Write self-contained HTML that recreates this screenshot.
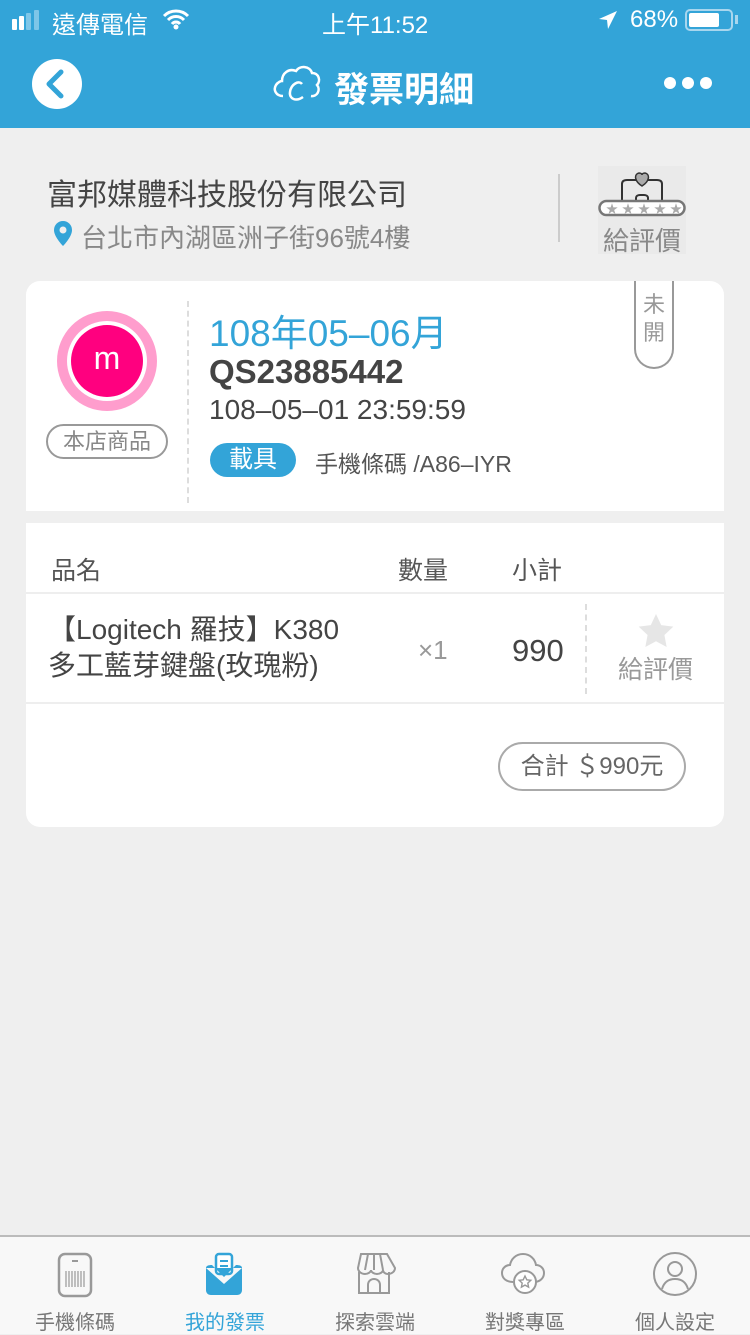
<!DOCTYPE html>
<html><head><meta charset="utf-8"><style>
*{margin:0;padding:0;box-sizing:border-box}
body{width:750px;height:1334px;background:#efefef;font-family:"Liberation Sans","Noto Sans CJK TC",sans-serif;position:relative;overflow:hidden;color:#444}
.abs{position:absolute}
.hdr{left:0;top:0;width:750px;height:128px;background:#33a4d8;color:#fff}
.card{left:26px;top:281px;width:698px;height:546px;background:#fff;border-radius:14px;overflow:hidden}
.tab{position:absolute;top:1306px;width:150px;text-align:center;font-size:20px;color:#777}
</style></head><body>
<div class="abs hdr">
  <div class="abs" style="left:12px;top:19px;width:5px;height:11px;background:#fff;border-radius:1px"></div>
  <div class="abs" style="left:19px;top:16px;width:5px;height:14px;background:#fff;border-radius:1px"></div>
  <div class="abs" style="left:26px;top:13px;width:5px;height:17px;background:#7ec6e8;border-radius:1px"></div>
  <div class="abs" style="left:34px;top:10px;width:5px;height:20px;background:#7ec6e8;border-radius:1px"></div>
  <div class="abs" style="left:52px;top:5px;font-size:24px">遠傳電信</div>
  <svg class="abs" style="left:162px;top:8px" width="28" height="22" viewBox="0 0 28 22"><path d="M2 8a17 17 0 0 1 24 0M6 12a11 11 0 0 1 16 0M10 16a5 5 0 0 1 8 0" stroke="#fff" stroke-width="3" fill="none"/><circle cx="14" cy="19" r="2.5" fill="#fff"/></svg>
  <div class="abs" style="left:322px;top:5px;font-size:24px">上午11:52</div>
  <svg class="abs" style="left:598px;top:10px" width="20" height="20" viewBox="0 0 20 20"><path d="M19 1L1 9l8 1 1 9z" fill="#fff"/></svg>
  <div class="abs" style="left:630px;top:6px;font-size:24px">68%</div>
  <div class="abs" style="left:685px;top:9px;width:48px;height:22px;border:2px solid #a8d6ee;border-radius:5px"><div style="margin:2px;width:30px;height:14px;background:#fff;border-radius:2px"></div></div>
  <div class="abs" style="left:735px;top:15px;width:3px;height:9px;background:#a8d6ee"></div>
  <div class="abs" style="left:32px;top:59px;width:50px;height:50px;border-radius:50%;background:#fff"></div>
  <svg class="abs" style="left:32px;top:59px" width="50" height="50" viewBox="0 0 50 50"><path d="M29 13L17 25l12 12" stroke="#33a4d8" stroke-width="5" fill="none" stroke-linecap="round" stroke-linejoin="round"/></svg>
  <svg class="abs" style="left:271px;top:60px" width="52" height="46" viewBox="0 0 52 46"><path d="M12 36c-7 0-10-6-7-11 2-3 5-4 6-4 0-8 7-13 14-10 4-6 14-5 16 2 7 0 9 8 5 12 4 5 0 12-6 11" stroke="#fff" stroke-width="2.5" fill="none"/><path d="M31 24c-3-4-11 0-12 8-1 7 6 10 13 5" stroke="#fff" stroke-width="2.5" fill="none"/></svg>
  <div class="abs" style="left:334px;top:62px;font-size:35px;font-weight:bold">發票明細</div>
  <div class="abs" style="left:664px;top:77px;width:12px;height:12px;border-radius:50%;background:#fff"></div>
  <div class="abs" style="left:682px;top:77px;width:12px;height:12px;border-radius:50%;background:#fff"></div>
  <div class="abs" style="left:700px;top:77px;width:12px;height:12px;border-radius:50%;background:#fff"></div>
</div>
<div class="abs" style="left:47px;top:170px;font-size:30px;color:#444">富邦媒體科技股份有限公司</div>
<svg class="abs" style="left:52px;top:220px" width="22" height="28" viewBox="0 0 22 28"><path d="M11 1a9 9 0 0 1 9 9c0 7-9 16-9 16S2 17 2 10a9 9 0 0 1 9-9z" fill="#33a4d8"/><circle cx="11" cy="10" r="3.5" fill="#efefef"/></svg>
<div class="abs" style="left:81px;top:218px;font-size:26px;color:#888">台北市內湖區洲子街96號4樓</div>
<div class="abs" style="left:558px;top:174px;width:2px;height:68px;background:#ccc"></div>
<div class="abs" style="left:598px;top:166px;width:88px;height:88px;background:#eaeaea"></div>
<svg class="abs" style="left:598px;top:166px" width="88" height="52" viewBox="0 0 88 52"><path d="M24 37V18c0-3 2-4 5-4h30c3 0 5 1 5 4v19" stroke="#333" stroke-width="2" fill="none"/><path d="M38 37v-5c0-2 2-3 4-3h4c2 0 4 1 4 3v5" stroke="#333" stroke-width="2" fill="none"/><path d="M44 20c-8-5-8-12-3-13 2 0 3 1 3 2 0-1 1-2 3-2 5 1 5 8-3 13z" fill="#aaa" stroke="#333" stroke-width="1.5"/><rect x="1.5" y="35" width="85" height="14" rx="7" fill="#fff" stroke="#777" stroke-width="2.5"/><text x="8" y="47" font-size="12" fill="#aaa" letter-spacing="4">★★★★★</text></svg>
<div class="abs" style="left:603px;top:221px;font-size:26px;color:#888">給評價</div>

<div class="abs card">
  <div class="abs" style="left:31px;top:30px;width:100px;height:100px;border-radius:50%;background:#ff9dcd"></div>
  <div class="abs" style="left:41px;top:40px;width:80px;height:80px;border-radius:50%;background:#fff"></div>
  <div class="abs" style="left:45px;top:44px;width:72px;height:72px;border-radius:50%;background:#ff007f;color:#fff;font-size:32px;text-align:center;line-height:66px">m</div>
  <div class="abs" style="left:20px;top:143px;width:122px;height:35px;border:2px solid #999;border-radius:18px;font-size:22px;color:#888;text-align:center;line-height:31px">本店商品</div>
  <div class="abs" style="left:161px;top:20px;height:202px;border-left:2px dashed #ddd"></div>
  <div class="abs" style="left:183px;top:22px;font-size:37px;color:#33a4d8">108年05–06月</div>
  <div class="abs" style="left:183px;top:72px;font-size:33px;font-weight:bold;color:#444">QS23885442</div>
  <div class="abs" style="left:183px;top:113px;font-size:28px;color:#444">108–05–01 23:59:59</div>
  <div class="abs" style="left:184px;top:162px;width:86px;height:34px;border-radius:17px;background:#33a4d8;color:#fff;font-size:24px;text-align:center;line-height:34px">載具</div>
  <div class="abs" style="left:289px;top:164px;font-size:23px;color:#555">手機條碼 /A86–IYR</div>
  <div class="abs" style="left:608px;top:-2px;width:40px;height:90px;border:2px solid #999;border-top:none;border-radius:0 0 20px 20px;font-size:22px;color:#999;text-align:center;line-height:28px;padding-top:12px">未<br>開</div>
  <div class="abs" style="left:0;top:230px;width:698px;height:12px;background:#efefef"></div>
  <div class="abs" style="left:25px;top:270px;font-size:25px;color:#555">品名</div>
  <div class="abs" style="left:372px;top:270px;font-size:25px;color:#555">數量</div>
  <div class="abs" style="left:486px;top:270px;font-size:25px;color:#555">小計</div>
  <div class="abs" style="left:0;top:311px;width:698px;height:2px;background:#eee"></div>
  <div class="abs" style="left:22px;top:331px;font-size:28px;color:#444;line-height:36px">【Logitech 羅技】K380<br>多工藍芽鍵盤(玫瑰粉)</div>
  <div class="abs" style="left:392px;top:354px;font-size:26px;color:#999">×1</div>
  <div class="abs" style="left:486px;top:352px;font-size:31px;color:#444">990</div>
  <div class="abs" style="left:559px;top:323px;height:90px;border-left:2px dashed #ddd"></div>
  <svg class="abs" style="left:612px;top:333px" width="36" height="34" viewBox="0 0 24 23"><path d="M12 0l3.5 7.5 8.2 1-6 5.7 1.5 8.1L12 18.4l-7.2 3.9 1.5-8.1-6-5.7 8.2-1z" fill="#e6e6e6"/></svg>
  <div class="abs" style="left:592px;top:369px;font-size:25px;color:#999">給評價</div>
  <div class="abs" style="left:0;top:421px;width:698px;height:2px;background:#eee"></div>
  <div class="abs" style="left:472px;top:461px;width:188px;height:49px;border:2px solid #aaa;border-radius:25px;font-size:24px;color:#666;text-align:center;line-height:45px">合計 ＄990元</div>
</div>

<div class="abs" style="left:0;top:1235px;width:750px;height:99px;background:#f8f8f8;border-top:2px solid #bbb"></div>
<svg class="abs" style="left:57px;top:1252px" width="36" height="46" viewBox="0 0 36 46"><rect x="2" y="2" width="32" height="42" rx="6" fill="none" stroke="#999" stroke-width="2.5"/><path d="M15 9h6" stroke="#999" stroke-width="2"/><path d="M9 19v16M12 19v16M15 19v16M18 19v16M21 19v16M24 19v16M27 19v16" stroke="#999" stroke-width="1.2"/></svg>
<svg class="abs" style="left:202px;top:1252px" width="44" height="44" viewBox="0 0 44 44"><rect x="14" y="2" width="16" height="20" rx="3" fill="#fff" stroke="#33a4d8" stroke-width="2.5"/><path d="M18 9h8M18 14h8" stroke="#33a4d8" stroke-width="2"/><path d="M4 16l18 16 18-16v22c0 3-2 5-5 5H9c-3 0-5-2-5-5z" fill="#33a4d8"/><path d="M4 16c0-2 2-3 6-3l12 12 12-12c4 0 6 1 6 3" fill="#33a4d8"/></svg>
<svg class="abs" style="left:351px;top:1252px" width="46" height="44" viewBox="0 0 46 44"><path d="M8 20v21h30V20M17 41v-8c0-4 3-6 6-6s6 2 6 6v8" fill="none" stroke="#999" stroke-width="2"/><path d="M10 2h26l8 14c0 4-4 6-7 6s-5-2-5-4c0 2-3 4-6 4s-6-2-6-4c0 2-3 4-6 4s-7-2-7-6z" fill="none" stroke="#999" stroke-width="2"/><path d="M17 2l-3 16M29 2l3 16M23 2v16" stroke="#999" stroke-width="2"/></svg>
<svg class="abs" style="left:500px;top:1252px" width="50" height="44" viewBox="0 0 50 44"><path d="M13 30c-7 0-11-4-11-9s4-8 8-8c1-6 6-11 13-11s12 5 13 11c4 0 8 3 8 8s-4 9-10 9" fill="none" stroke="#999" stroke-width="2"/><circle cx="25" cy="30" r="11" fill="#fff" stroke="#999" stroke-width="2"/><path d="M25 24l1.8 3.8 4 .5-3 2.8.8 4-3.6-2-3.6 2 .8-4-3-2.8 4-.5z" fill="none" stroke="#999" stroke-width="1.4"/></svg>
<svg class="abs" style="left:652px;top:1251px" width="46" height="46" viewBox="0 0 46 46"><circle cx="23" cy="23" r="21" fill="none" stroke="#999" stroke-width="2"/><circle cx="23" cy="18" r="7" fill="none" stroke="#999" stroke-width="2"/><path d="M10 38c2-7 7-10 13-10s11 3 13 10" fill="none" stroke="#999" stroke-width="2"/></svg>
<div class="tab" style="left:0">手機條碼</div>
<div class="tab" style="left:150px;color:#33a4d8">我的發票</div>
<div class="tab" style="left:300px">探索雲端</div>
<div class="tab" style="left:450px">對獎專區</div>
<div class="tab" style="left:600px">個人設定</div>
</body></html>
